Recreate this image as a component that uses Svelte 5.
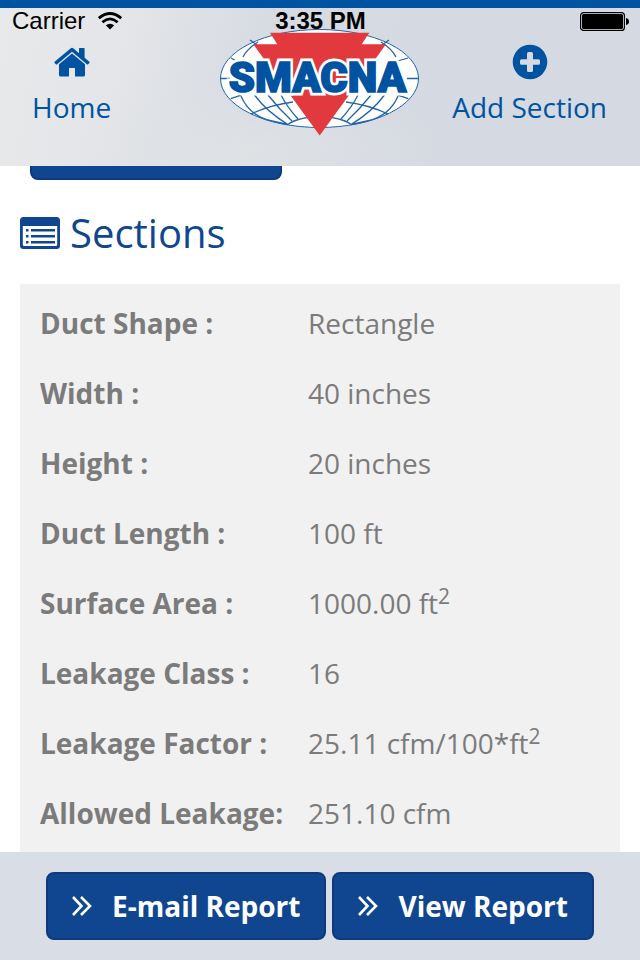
<script>
  import { onMount } from 'svelte';

  const rows = [
    { label: 'Duct Shape :', value: 'Rectangle' },
    { label: 'Width :', value: '40 inches' },
    { label: 'Height :', value: '20 inches' },
    { label: 'Duct Length :', value: '100 ft' },
    { label: 'Surface Area :', value: '1000.00 ft', power: '2' },
    { label: 'Leakage Class :', value: '16' },
    { label: 'Leakage Factor :', value: '25.11 cfm/100*ft', power: '2' },
    { label: 'Allowed Leakage:', value: '251.10 cfm' }
  ];
  const actions = ['E-mail Report', 'View Report'];

  let content;
  onMount(() => {
    content.scrollTop = 54;
  });
</script>

<div class="screen">
  <header>
    <div class="status">
      <span class="carrier">
        Carrier
        <svg width="24" height="18" viewBox="0 0 24 18" aria-hidden="true">
          <g fill="none" stroke="#000" stroke-width="2.8">
            <path d="M0.8 6.2Q12 -3.200 23.200 6.200" />
            <path d="M4.400 10.200Q12 3.600 19.600 10.200" />
          </g>
          <path d="M7.800 13.300Q12 10 16.200 13.300L12 17.600Z" />
        </svg>
      </span>
      <span class="clock">3:35 PM</span>
      <svg class="battery" width="49" height="19" viewBox="0 0 49 19" aria-hidden="true">
        <rect x="0.6" y="0.6" width="43.8" height="17.8" rx="3" fill="#dfe5e4" stroke="#000" stroke-width="1.2" />
        <rect x="2" y="2" width="41" height="15" rx="1.5" />
        <path d="M46 6Q49 6.500 49 9.500Q49 12.500 46 13Z" />
      </svg>
    </div>
    <nav>
      <a class="home" href="#home">
        <svg width="36" height="29" viewBox="0 0 36 29" aria-hidden="true">
          <path d="M18 0.300Q18.700 0.300 19.500 1.100L25 5.700V1Q25 0.400 25.600 0.400H30Q30.600 0.400 30.600 1V10.300L35.400 14.300Q35.900 14.800 35.500 15.300L34.200 16.800Q33.700 17.300 33.200 16.900L18 4.300L2.800 16.900Q2.300 17.300 1.800 16.800L0.500 15.300Q0.100 14.800 0.600 14.300L16.500 1.100Q17.300 0.300 18 0.300Z" />
          <path d="M18 6L31 16.700V27.500Q31 29 29.500 29H21V20.500H15V29H6.500Q5 29 5 27.500V16.700Z" />
        </svg>
        Home
      </a>
      <svg class="logo" width="200" height="108" viewBox="0 0 200 108" role="img" aria-label="SMACNA">
        <ellipse cx="99.500" cy="49.500" rx="99" ry="49" fill="#fff" stroke="#2464ad" />
        <g fill="none" stroke="#2464ad" stroke-width="1.300">
          <path d="M0 49.500H10M187 49.500H199" />
          <path d="M23 28Q27 20 38 13M30 11L37 16M11 29L18 33M176 28Q172 20 161 13M169 11L162 16M188 29L174 33" />
          <path d="M10.700 69.700L20.500 66.300M188.300 69.700L178.500 66.300" />
          <path d="M31 85Q50 76 73 73M168 85Q149 76 126 73" />
          <path d="M20.500 66Q29 87 52 92Q60 94 68 95.500M34.500 66Q47 83 68 95.500M48 66Q59 80 72 92M61 66Q67 78 78 90" />
          <path d="M178.500 66Q170 87 147 92Q139 94 131 95.500M164.500 66Q152 83 131 95.500M151 66Q140 80 127 92M138 66Q132 78 121 90" />
          <path d="M68 95.500Q76 89 99.500 87Q123 89 131 95.500" />
        </g>
        <path d="M50 3.700H149.300L141.700 15.300H166L99.700 106.500L33.300 15.300H57.300Z" fill="#e1393e" />
        <g class="wordmark">
          <text class="outline" x="97.500" y="62.500">SMACNA</text>
          <text x="97.500" y="62.500">SMACNA</text>
        </g>
      </svg>
      <a class="add" href="#add">
        <svg width="36" height="36" viewBox="0 0 36 36" aria-hidden="true">
          <path fill-rule="evenodd" d="M18 .7a17.300 17.300 0 1 0 0 34.600a17.300 17.300 0 1 0 0-34.600zM16.500 8h3a1.500 1.500 0 0 1 1.500 1.500V15.300H26.500a1.500 1.500 0 0 1 1.500 1.500v2.400a1.500 1.500 0 0 1-1.500 1.500H21V26.500a1.500 1.500 0 0 1-1.500 1.500h-3a1.500 1.500 0 0 1-1.500-1.500V20.700H9.500a1.500 1.500 0 0 1-1.500-1.500v-2.400a1.500 1.500 0 0 1 1.500-1.500H15V9.500a1.500 1.500 0 0 1 1.500-1.500z" />
        </svg>
        Add Section
      </a>
    </nav>
  </header>

  <main bind:this={content}>
    <button class="previous" type="button" aria-label="Calculate"></button>
    <h1>
      <svg width="40" height="32" viewBox="0 0 40 32" aria-hidden="true">
        <path fill-rule="evenodd" d="M3.500 0h33A3.500 3.500 0 0 1 40 3.500v25a3.500 3.500 0 0 1-3.500 3.500h-33A3.500 3.500 0 0 1 0 28.500v-25A3.500 3.500 0 0 1 3.500 0zM2.800 9v18.500q0 1.500 1.500 1.500h31.400q1.500 0 1.500-1.500V9z" />
        <path d="M6 12h2.500v2.500H6zM6 18h2.500v2.500H6zM6 24h2.500v2.500H6zM11 12h24v2.500H11zM11 18h24v2.500H11zM11 24h24v2.500H11z" />
      </svg>
      Sections
    </h1>
    <div class="panel">
      <table>
        <tbody>
          {#each rows as row}
            <tr>
              <th scope="row">{row.label}</th>
              <td>{row.value}{#if row.power}<sup>{row.power}</sup>{/if}</td>
            </tr>
          {/each}
        </tbody>
      </table>
    </div>
  </main>

  <footer>
    {#each actions as action}
      <button type="button">
        <svg width="20" height="20" viewBox="0 0 20 20" aria-hidden="true">
          <path d="M1 1L9.500 10L1 19M9 1L18 10L9 19" fill="none" stroke="#fff" stroke-width="2.600" />
        </svg>
        {action}
      </button>
    {/each}
  </footer>
</div>

<style>
  :global(body) {
    margin: 0;
  }
  .screen {
    display: flex;
    flex-direction: column;
    height: 100vh;
    background: #fff;
    color: #7b7b7b;
    font: 28px/38px 'Open Sans', 'Noto Sans', sans-serif;
  }
  header {
    flex: none;
    box-sizing: border-box;
    height: 166px;
    border-top: 8px solid #0053a0;
    background:
      radial-gradient(ellipse at 38% 90%, #dfe2e5 0, transparent 35%),
      linear-gradient(100deg, #e8e9eb 0, #e3e5e8 20%, #d6dae2 42%, #d5d9e1 100%);
  }
  .status {
    display: grid;
    grid-template-columns: 1fr auto 1fr;
    align-items: center;
    height: 26px;
    padding: 0 11px 0 12px;
    color: #000;
    font: 24px/26px 'Liberation Sans', Arial, sans-serif;
  }
  .carrier {
    display: flex;
    align-items: center;
    gap: 13px;
  }
  .clock {
    font-weight: bold;
  }
  .battery {
    justify-self: end;
  }
  nav {
    display: grid;
    grid-template-columns: 1fr 200px 1fr;
    align-items: start;
    padding: 0 33px 0 32px;
  }
  nav a {
    display: flex;
    flex-direction: column;
    align-items: center;
    gap: 8px;
    padding-top: 10px;
    color: #0053a0;
    text-decoration: none;
  }
  nav a svg {
    height: 36px;
    fill: #0053a0;
  }
  .home {
    justify-self: start;
  }
  .add {
    justify-self: end;
    white-space: nowrap;
  }
  .logo {
    margin-top: -5px;
  }
  .wordmark {
    fill: #0053a0;
    stroke: #0053a0;
    stroke-width: 1.6;
    font: 900 42px Roboto, 'Liberation Sans', sans-serif;
    text-anchor: middle;
  }
  .outline {
    fill: #fff;
    stroke: #fff;
    stroke-width: 7;
  }
  main {
    flex: 1;
    min-height: 0;
    overflow-y: auto;
    scrollbar-width: none;
    padding: 0 20px;
  }
  button {
    box-sizing: border-box;
    height: 68px;
    border: 2px solid #0d3a7c;
    border-radius: 8px;
    background: #10468f;
    color: #fff;
    font: bold 28px/38px 'Open Sans', 'Noto Sans', sans-serif;
  }
  .previous {
    display: block;
    width: 252px;
    margin-left: 10px;
  }
  h1 {
    display: flex;
    align-items: center;
    gap: 10px;
    margin: 26px 0 24px;
    color: #10468f;
    font-size: 40px;
    font-weight: normal;
    line-height: 54px;
  }
  h1 svg {
    fill: #10468f;
  }
  .panel {
    padding: 4px 20px 20px;
    background: #f1f1f1;
  }
  table {
    width: 100%;
    border-collapse: collapse;
  }
  th,
  td {
    height: 70px;
    padding: 0;
    text-align: left;
  }
  th {
    width: 268px;
    white-space: nowrap;
  }
  sup {
    position: relative;
    top: -10px;
    font-size: 21px;
    line-height: 0;
    vertical-align: baseline;
  }
  footer {
    flex: none;
    display: flex;
    justify-content: center;
    gap: 6px;
    padding: 20px 0;
    background: #d9dde5;
  }
  footer button {
    display: flex;
    align-items: center;
    gap: 20px;
    padding: 0 24px;
  }
</style>
